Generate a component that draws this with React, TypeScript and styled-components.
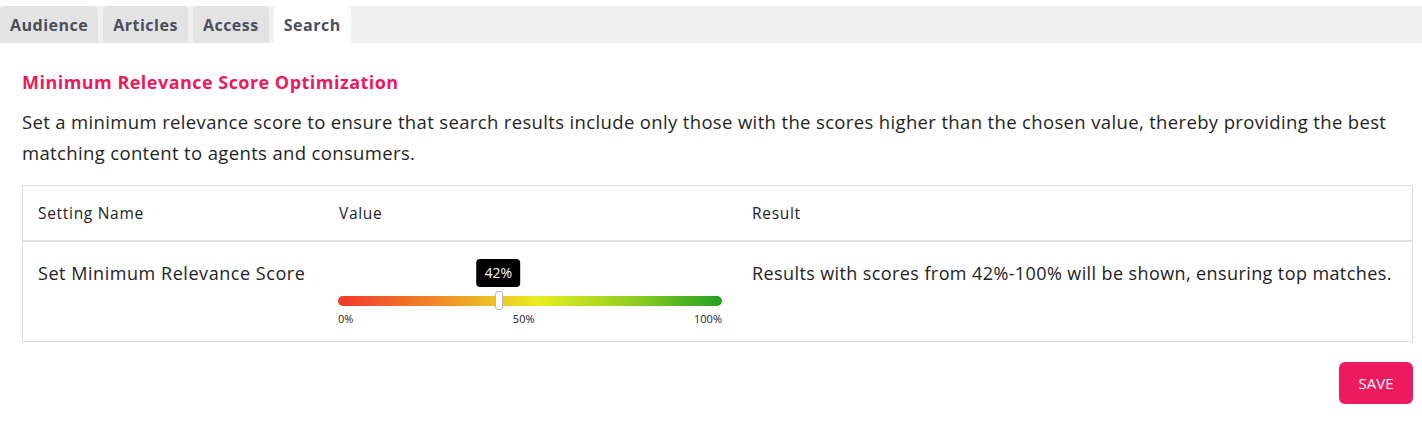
import { useState } from "react";
import styled, { createGlobalStyle } from "styled-components";

const GlobalStyle = createGlobalStyle`
    body {
        margin: 0;
        background: #ffffff;
        font-family: "Open Sans", "Lato", sans-serif;
        color: #222222;
    }
`;

const Page = styled.div`
    padding-top: 6px;
`;

const TabBar = styled.div`
    display: flex;
    gap: 5px;
    height: 37px;
    background: #f0f0f0;
`;

const Tab = styled.button<{ $active?: boolean }>`
    border: none;
    padding: 0 10px;
    border-radius: 5px 5px 0 0;
    background: ${(p) => (p.$active ? "#ffffff" : "#e3e3e3")};
    color: #4a4e5f;
    font-family: inherit;
    font-size: 16px;
    font-weight: 700;
    letter-spacing: 0.5px;
    cursor: pointer;
`;

const Content = styled.div`
    padding: 27px 9px 0 22px;
`;

const Heading = styled.h2`
    margin: 0;
    font-size: 18px;
    line-height: 24px;
    font-weight: 700;
    letter-spacing: 0.47px;
    color: #ea1a5e;
`;

const Description = styled.p`
    margin: 12px 0 0;
    font-size: 18.5px;
    line-height: 31px;
    letter-spacing: 0.35px;
    color: #1f1f24;
`;

const Table = styled.div`
    margin-top: 17px;
    border: 1px solid #dcdcdc;
`;

const Row = styled.div<{ $head?: boolean }>`
    display: grid;
    grid-template-columns: 301px 413px 1fr;
    height: ${(p) => (p.$head ? "54px" : "99px")};
    border-bottom: ${(p) => (p.$head ? "2px solid #dde1e6" : "none")};
    align-items: ${(p) => (p.$head ? "center" : "start")};
`;

const Cell = styled.div<{ $head?: boolean }>`
    padding: ${(p) => (p.$head ? "0 15px" : "19px 15px 0")};
    font-size: ${(p) => (p.$head ? "15.5px" : "18px")};
    letter-spacing: ${(p) => (p.$head ? "0.7px" : "0.55px")};
    line-height: 24px;
    color: #222226;
`;

const ResultCell = styled(Cell)`
    padding-right: 8px;
    letter-spacing: 0.4px;
    white-space: nowrap;
`;

const SliderWrap = styled.div`
    position: relative;
    width: 384px;
    margin: -2px 0 0 -1px;
    padding-top: 37px;
    letter-spacing: 0;
`;

const Track = styled.div`
    height: 10px;
    border-radius: 5px;
    background: linear-gradient(90deg, #f3372a 0%, #f08628 25%, #e9ee22 52%, #8ccc22 78%, #22a020 100%);
`;

const Thumb = styled.div`
    position: absolute;
    top: 32px;
    width: 6px;
    height: 17px;
    margin-left: -4px;
    border: 1px solid #b8b8b8;
    border-radius: 3px;
    background: #ffffff;
`;

const Tooltip = styled.div`
    position: absolute;
    top: 0;
    transform: translateX(-50%);
    margin-left: -1px;
    padding: 0 8px;
    height: 28px;
    line-height: 28px;
    border-radius: 4px;
    background: #000000;
    color: #ffffff;
    font-size: 14px;
`;

const Marks = styled.div`
    display: flex;
    justify-content: space-between;
    margin-top: 6px;
    font-size: 11px;
    line-height: 14px;
    color: #222226;
`;

const Footer = styled.div`
    display: flex;
    justify-content: flex-end;
    margin-top: 20px;
`;

const SaveButton = styled.button`
    width: 74px;
    height: 42px;
    border: none;
    border-radius: 6px;
    background: #ee1a5f;
    color: #ffffff;
    font-family: inherit;
    font-size: 15px;
    cursor: pointer;
`;

const tabs = ["Audience", "Articles", "Access", "Search"];

export default function App() {
    const [active, setActive] = useState("Search");
    const [score] = useState(42);

    return (
        <Page>
            <GlobalStyle />
            <TabBar>
                {tabs.map((t) => (
                    <Tab key={t} $active={t === active} onClick={() => setActive(t)}>
                        {t}
                    </Tab>
                ))}
            </TabBar>
            <Content>
                <Heading>Minimum Relevance Score Optimization</Heading>
                <Description>
                    Set a minimum relevance score to ensure that search results include only those with the scores higher than the chosen value, thereby providing the best matching content to agents and consumers.
                </Description>
                <Table>
                    <Row $head>
                        <Cell $head>Setting Name</Cell>
                        <Cell $head>Value</Cell>
                        <Cell $head>Result</Cell>
                    </Row>
                    <Row>
                        <Cell>Set Minimum Relevance Score</Cell>
                        <Cell>
                            <SliderWrap>
                                <Tooltip style={{ left: `${score}%` }}>{score}%</Tooltip>
                                <Track />
                                <Thumb style={{ left: `${score}%` }} />
                                <Marks>
                                    <span>0%</span>
                                    <span>50%</span>
                                    <span>100%</span>
                                </Marks>
                            </SliderWrap>
                        </Cell>
                        <ResultCell>Results with scores from {score}%-100% will be shown, ensuring top matches.</ResultCell>
                    </Row>
                </Table>
                <Footer>
                    <SaveButton>SAVE</SaveButton>
                </Footer>
            </Content>
        </Page>
    );
}
